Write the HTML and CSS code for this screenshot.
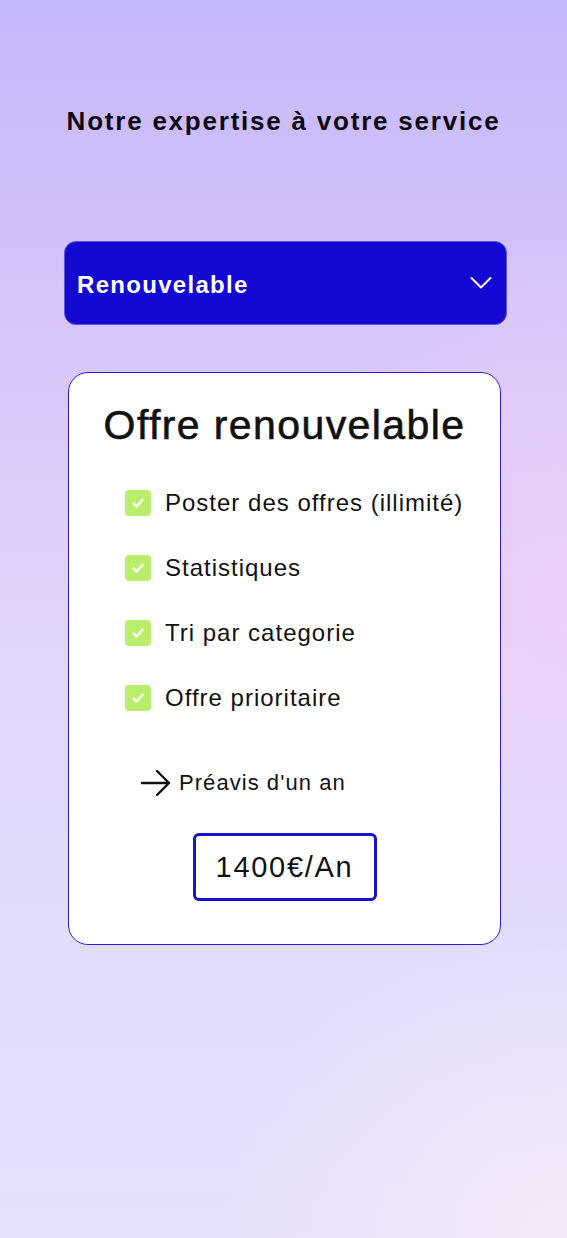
FILE: index.html
```html
<!DOCTYPE html>
<html lang="fr">
<head>
<meta charset="utf-8">
<title>Notre expertise</title>
<link rel="stylesheet" href="styles.css">
</head>
<body>
<main class="page">
  <h1 class="heading">Notre expertise à votre service</h1>
  <div class="select">
    <span class="select-label">Renouvelable</span>
    <svg class="chevron" width="22" height="14" viewBox="0 0 22 14"><path d="M1.5 2 L11 11.5 L20.5 2" fill="none" stroke="#fff" stroke-width="2" stroke-linecap="round" stroke-linejoin="round"/></svg>
  </div>
  <section class="card">
    <h2 class="card-title">Offre renouvelable</h2>
    <ul class="features">
      <li class="feature"><span class="check"><svg width="16" height="16" viewBox="0 0 16 16"><path d="M3.5 8.5 L6.7 11.5 L12.5 4.8" fill="none" stroke="#fff" stroke-width="2.4" stroke-linecap="round" stroke-linejoin="round"/></svg></span>Poster des offres (illimité)</li>
      <li class="feature"><span class="check"><svg width="16" height="16" viewBox="0 0 16 16"><path d="M3.5 8.5 L6.7 11.5 L12.5 4.8" fill="none" stroke="#fff" stroke-width="2.4" stroke-linecap="round" stroke-linejoin="round"/></svg></span>Statistiques</li>
      <li class="feature"><span class="check"><svg width="16" height="16" viewBox="0 0 16 16"><path d="M3.5 8.5 L6.7 11.5 L12.5 4.8" fill="none" stroke="#fff" stroke-width="2.4" stroke-linecap="round" stroke-linejoin="round"/></svg></span>Tri par categorie</li>
      <li class="feature"><span class="check"><svg width="16" height="16" viewBox="0 0 16 16"><path d="M3.5 8.5 L6.7 11.5 L12.5 4.8" fill="none" stroke="#fff" stroke-width="2.4" stroke-linecap="round" stroke-linejoin="round"/></svg></span>Offre prioritaire</li>
    </ul>
    <div class="notice">
      <svg class="arrow" width="32" height="28" viewBox="0 0 32 28"><path d="M2 14 H29 M17 2 L29 14 L17 26" fill="none" stroke="#111" stroke-width="2.4" stroke-linecap="round" stroke-linejoin="round"/></svg>
      <span>Préavis d'un an</span>
    </div>
    <div class="price">1400€/An</div>
  </section>
</main>
</body>
</html>
```

FILE: styles.css
```css
html, body {
  margin: 0;
  padding: 0;
}
body {
  min-height: 1238px;
  font-family: "Liberation Sans", Arial, sans-serif;
  color: #111;
  background:
    radial-gradient(ellipse 420px 520px at 100% 48%, rgba(236, 206, 250, 0.85), rgba(236, 206, 250, 0) 70%),
    radial-gradient(ellipse 460px 420px at 100% 100%, rgba(244, 232, 248, 1), rgba(244, 232, 248, 0) 75%),
    linear-gradient(180deg, #c5b8fa 0%, #d6c4f9 25%, #e2d6fb 55%, #e0defb 80%, #e6e0fa 100%);
}
.page {
  display: flex;
  flex-direction: column;
  align-items: center;
  padding-top: 105px;
}
.heading {
  margin: 0;
  font-size: 26px;
  line-height: 32px;
  font-weight: 700;
  letter-spacing: 1.78px;
  color: #0d0a14;
}
.select {
  box-sizing: border-box;
  margin-top: 104px;
  width: 443px;
  height: 84px;
  align-self: flex-start;
  margin-left: 64px;
  background: #1309d3;
  border: 1px solid #5a55d6;
  border-radius: 12px;
  display: flex;
  align-items: center;
  justify-content: space-between;
  padding: 3px 14px 0 12px;
}
.select-label {
  color: #fff;
  font-size: 24px;
  font-weight: 700;
  letter-spacing: 1.3px;
}
.chevron {
  display: block;
  margin-top: -3px;
}
.card {
  box-sizing: border-box;
  margin-top: 47px;
  align-self: flex-start;
  margin-left: 68px;
  width: 433px;
  height: 573px;
  background: #fff;
  border: 1px solid #2c1ed6;
  border-radius: 20px;
  display: flex;
  flex-direction: column;
  align-items: center;
  padding-top: 29px;
}
.card-title {
  margin: 0;
  font-size: 41px;
  line-height: 46px;
  font-weight: 400;
  color: #111;
  letter-spacing: 1.4px;
  -webkit-text-stroke: 0.6px #111;
}
.features {
  list-style: none;
  margin: 42px 0 0 0;
  padding: 0 0 0 56px;
  align-self: stretch;
  display: flex;
  flex-direction: column;
  gap: 39px;
}
.feature {
  display: flex;
  align-items: center;
  gap: 14px;
  font-size: 24px;
  line-height: 26px;
  letter-spacing: 1px;
  color: #111;
}
.check {
  width: 26px;
  height: 26px;
  border-radius: 4px;
  background: #b8ee6a;
  display: flex;
  align-items: center;
  justify-content: center;
  flex: none;
}
.check svg {
  display: block;
}
.notice {
  align-self: flex-start;
  margin: 58px 0 0 71px;
  display: flex;
  align-items: center;
  gap: 7px;
  font-size: 22px;
  letter-spacing: 1.05px;
  color: #111;
}
.arrow {
  display: block;
}
.price {
  box-sizing: border-box;
  margin-top: 36px;
  width: 184px;
  height: 68px;
  border: 3px solid #1a10d0;
  border-radius: 6px;
  display: flex;
  align-items: center;
  justify-content: center;
  font-size: 29px;
  letter-spacing: 1.7px;
  color: #111;
}
```
